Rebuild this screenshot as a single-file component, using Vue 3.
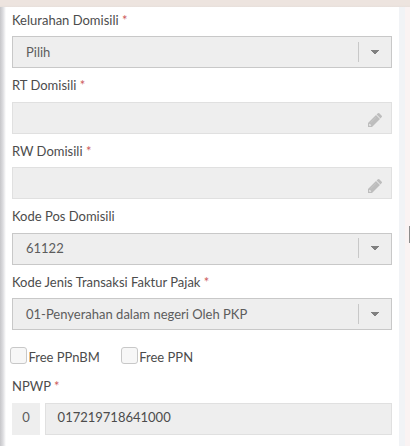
<template>
  <div class="page">
    <div class="top-band"></div>
    <div class="body">
      <div class="left-shadow"></div>

      <form class="form" @submit.prevent>
        <div v-for="field in fields" :key="field.label" class="field">
          <label class="label">
            {{ field.label }} <span v-if="field.required" class="required">*</span>
          </label>
          <div class="box" :class="field.type">
            <span class="value">{{ field.value }}</span>
            <span v-if="field.type === 'select'" class="arrow">
              <svg width="8" height="4" viewBox="0 0 8 4" shape-rendering="crispEdges">
                <path d="M0 0h8v1H0zM1 1h6v1H1zM2 2h4v1H2zM3 3h2v1H3z" fill="#808080" />
              </svg>
            </span>
            <svg v-else class="pencil" width="14" height="14" viewBox="0 0 14 14">
              <path d="M0 14V10L8 2L12 6L4 14Z" fill="#bdbdbd" />
              <path d="M8.6 1.5L9.9 .3Q10.6-.3 11.3 .3L13.7 2.7Q14.3 3.4 13.7 4.1L12.5 5.4Z" fill="#bdbdbd" />
              <path d="M1.2 11.3V12.8H2.7L3.2 12.2L1.8 10.8Z" fill="#ededed" />
              <path d="M2.6 9.7L8 4.3" stroke="#d0d0d0" stroke-width=".5" />
            </svg>
          </div>
        </div>

        <!-- Tax exemptions -->
        <div class="checks">
          <label v-for="name in checks" :key="name" class="check">
            <span class="check-box"></span>{{ name }}
          </label>
        </div>

        <div class="field">
          <label class="label">NPWP <span class="required">*</span></label>
          <div class="npwp">
            <span class="prefix">0</span>
            <div class="box number">
              <span class="value">017219718641000</span>
            </div>
          </div>
        </div>
      </form>

      <div class="gutter"></div>
      <div class="scroll">
        <div class="thumb"></div>
      </div>
    </div>
  </div>
</template>

<script setup>
const fields = [
  { label: 'Kelurahan Domisili', value: 'Pilih', type: 'select', required: true },
  { label: 'RT Domisili', value: '', type: 'text', required: true },
  { label: 'RW Domisili', value: '', type: 'text', required: true },
  { label: 'Kode Pos Domisili', value: '61122', type: 'select', required: false },
  { label: 'Kode Jenis Transaksi Faktur Pajak', value: '01-Penyerahan dalam negeri Oleh PKP', type: 'select', required: true }
];

const checks = ['Free PPnBM', 'Free PPN'];
</script>

<style>
body {
  margin: 0;
  overflow: hidden;
}
</style>

<style scoped>
.page {
  display: flex;
  flex-direction: column;
  height: 446px;
  font-family: Lato, "Liberation Sans", sans-serif;
  font-size: 13px;
  color: #4c4c4c;
  background: #fff;
}

.top-band {
  height: 7px;
  background: linear-gradient(#ede4df 5px, #e7dfdb);
}

.body {
  flex: 1;
  display: flex;
  min-height: 0;
}

.left-shadow {
  width: 6px;
  background: linear-gradient(to right, #c6c6c9, #dddde0 50%, #fff);
}

.form {
  flex: 1;
  min-width: 0;
  padding: 2.75px 7px 0 6px;
}

.field {
  margin-bottom: 7.25px;
}

.label {
  display: block;
  line-height: 20px;
  margin-bottom: 6.25px;
  white-space: nowrap;
}

.required {
  color: #cc5c5c;
}

.box {
  display: flex;
  align-items: center;
  justify-content: space-between;
  box-sizing: border-box;
  height: 32px;
  padding-left: 13px;
  border: 1px solid #e0e0e0;
  background: #eee;
  color: #5c5c5c;
}

.box.select {
  padding-bottom: 0.5px;
  border-color: #c8c8c8;
}

.value {
  line-height: 16px;
}

.arrow {
  display: flex;
  align-items: center;
  justify-content: center;
  width: 32px;
  height: 20px;
  border-left: 1px solid #c8c8c8;
}

.pencil {
  margin: 5px 9px 0 0;
}

.checks {
  display: flex;
  gap: 21px;
  height: 18px;
  margin: 17px 0 11.25px -2px;
}

.check {
  display: flex;
  gap: 1.4px;
  line-height: 20px;
  white-space: nowrap;
}

.check-box {
  box-sizing: border-box;
  width: 17px;
  height: 17px;
  border: 1px solid #c8c8c8;
  border-radius: 3px;
  background: #f7f7f7;
}

.npwp {
  display: flex;
  gap: 5px;
}

.prefix {
  width: 28px;
  line-height: 29px;
  height: 32px;
  text-align: center;
  background: #eee;
  color: #5c5c5c;
}

.number {
  flex: 1;
  padding: 0 0 3px 11.6px;
  color: #4c4c4c;
}

.gutter {
  width: 6px;
  background: #f1f3f6;
}

.scroll {
  display: flex;
  justify-content: flex-end;
  width: 5px;
  background: #faf3f3;
}

.thumb {
  width: 1px;
  height: 17px;
  margin-top: 219px;
  background: #8c8c8c;
}
</style>
